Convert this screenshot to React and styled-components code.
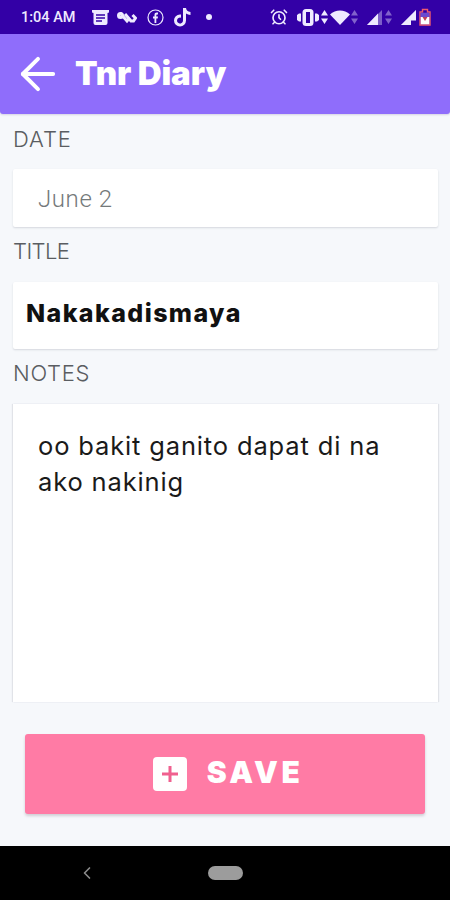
import React from "react";
import styled, { createGlobalStyle } from "styled-components";
import { ArrowLeft, AlarmClock, ChevronLeft } from "lucide-react";

const GlobalStyle = createGlobalStyle`
  html, body {
    margin: 0;
    padding: 0;
    background: #f6f8fb;
  }
  * {
    box-sizing: border-box;
  }
`;

const Screen = styled.div`
  width: 450px;
  height: 900px;
  display: flex;
  flex-direction: column;
  overflow: hidden;
  background: #f6f8fb;
  font-family: Inter, "Open Sans", "Liberation Sans", sans-serif;
`;

const StatusBar = styled.div`
  height: 34px;
  flex: none;
  display: flex;
  align-items: center;
  justify-content: space-between;
  padding: 0 19px 0 21px;
  background: #3300a6;
  color: #eeeaff;
`;

const StatusGroup = styled.div`
  display: flex;
  align-items: center;
`;

const Clock = styled.span`
  width: 71px;
  font-family: Roboto, sans-serif;
  font-size: 14.5px;
  font-weight: 500;
  white-space: nowrap;
`;

const Header = styled.div`
  height: 80px;
  flex: none;
  display: flex;
  align-items: center;
  padding: 0 0 0 12px;
  gap: 12px;
  background: #8f6dfb;
  color: #fff;
  border-radius: 0 0 3px 3px;
  box-shadow: 0 1px 2px rgba(60, 40, 120, 0.18);
`;

const HeaderTitle = styled.div`
  font-size: 33px;
  font-weight: 900;
  letter-spacing: -0.1px;
  margin-top: -3px;
  margin-left: -1px;
`;

const Body = styled.div`
  flex: 1;
  display: flex;
  flex-direction: column;
  padding: 13px 12px 0 13px;
  min-height: 0;
`;

const Label = styled.div`
  height: 25px;
  margin-bottom: ${(p) => p.$gap}px;
  font-size: 22px;
  line-height: 25px;
  font-weight: 300;
  color: #5a5d61;
  letter-spacing: ${(p) => p.$spacing}px;
`;

const Card = styled.div`
  height: ${(p) => p.$height}px;
  flex: none;
  display: flex;
  align-items: ${(p) => (p.$top ? "flex-start" : "center")};
  margin-bottom: 12px;
  padding-left: ${(p) => p.$inset}px;
  background: #fff;
  border-radius: 2px;
  box-shadow: 0 1px 2px rgba(40, 50, 70, 0.16);
`;

const DateText = styled.span`
  font-family: Roboto, sans-serif;
  font-size: 24px;
  font-weight: 300;
  color: #74797a;
  letter-spacing: 0.6px;
  margin-top: 2px;
`;

const TitleText = styled.span`
  font-size: 25px;
  font-weight: 800;
  color: #111;
  letter-spacing: 1.4px;
  margin-top: -5px;
`;

const NotesCard = styled(Card)`
  margin-bottom: 0;
  padding: 24px 40px 0 25px;
  border-radius: 0;
  box-shadow: -1px 0 1px rgba(40, 50, 70, 0.1), 1px 0 1px rgba(40, 50, 70, 0.1);
`;

const NotesText = styled.div`
  font-size: 25.5px;
  line-height: 36px;
  font-weight: 400;
  color: #1a1a1a;
  letter-spacing: 0.85px;
`;

const Footer = styled.div`
  height: 144px;
  flex: none;
  padding: 32px 25px 0;
`;

const SaveButton = styled.div`
  height: 80px;
  display: flex;
  align-items: center;
  justify-content: center;
  gap: 20px;
  padding: 0 0 4px 6px;
  background: #ff7ba5;
  border-radius: 3px;
  box-shadow: 0 2px 3px rgba(60, 40, 60, 0.2);
`;

const PlusBox = styled.div`
  width: 34px;
  height: 34px;
  margin-top: 4px;
  display: flex;
  align-items: center;
  justify-content: center;
  background: #fff;
  border-radius: 4px;
`;

const SaveLabel = styled.span`
  font-size: 30px;
  font-weight: 900;
  color: #fff;
  letter-spacing: 3.5px;
`;

const NavBar = styled.div`
  height: 54px;
  flex: none;
  position: relative;
  display: flex;
  align-items: center;
  justify-content: center;
  background: #000;
`;

const NavBack = styled.div`
  position: absolute;
  left: 77px;
  top: 17px;
  color: #8a8a8a;
  display: flex;
`;

const HomePill = styled.div`
  width: 35px;
  height: 14px;
  border-radius: 7px;
  background: #9c9c9c;
`;

const StatusIcon = styled.svg`
  display: block;
  flex: none;
  margin-left: ${(p) => p.$left || 0}px;
`;

const AlarmSlot = styled.div`
  display: flex;
  color: #eeeaff;
`;

const NewsIcon = () => (
  <StatusIcon width="17" height="15" viewBox="0 0 17 15">
    <path fill="currentColor" d="M0 0h17v2.5l-1.5.5V13a2 2 0 0 1-2 2H3.5a2 2 0 0 1-2-2V3L0 2.5Z" />
    <path stroke="#3300a6" strokeWidth="1.5" d="M4 5h9M4 8h9M4 11h6" />
  </StatusIcon>
);

const LoopIcon = () => (
  <StatusIcon $left={8} width="20" height="13" viewBox="0 0 20 13">
    <g fill="none" stroke="currentColor" strokeWidth="3">
      <path d="M3 2l7 8 2.500-3" />
      <path d="M8 3l6 7h2.500l2-3-3-3" />
      <circle cx="3.500" cy="4.500" r="2" />
    </g>
  </StatusIcon>
);

const FacebookIcon = () => (
  <StatusIcon $left={10} width="17" height="17" viewBox="0 0 17 17">
    <circle cx="8.500" cy="8.500" r="7.500" fill="none" stroke="currentColor" strokeWidth="1.200" />
    <path fill="currentColor" d="M7.500 14V9.500H6V7.500h1.500V6c0-1.600 1-2.400 2.300-2.400h1.200v2H10c-.5 0-.7.3-.7.8v1.100H11l-.3 2H9.300V14Z" />
  </StatusIcon>
);

const TiktokIcon = () => (
  <StatusIcon $left={10} width="18" height="19" viewBox="0 0 18 19">
    <path fill="currentColor" d="M9 0h3c.2 2.300 1.700 3.800 4.500 4v3c-1.700 0-3.200-.5-4.500-1.400V12.500a6 6 0 1 1-6-6c.4 0 .7 0 1 .1v3.200a3 3 0 1 0 2 2.800Z" />
  </StatusIcon>
);

const WifiIcon = () => (
  <StatusIcon $left={2} width="20" height="15" viewBox="0 0 20 15">
    <path fill="currentColor" d="M0 4.500C5.500-1 14.500-1 20 4.500L10 15Z" />
  </StatusIcon>
);

const VibrateIcon = () => (
  <StatusIcon $left={9} width="22" height="17" viewBox="0 0 22 17">
    <rect x="5.500" y="0" width="11" height="17" rx="3.500" fill="currentColor" />
    <rect x="9" y="3" width="4" height="11" fill="#3300a6" />
    <path fill="currentColor" d="M0 6 2 4.500h2v8H2L0 11ZM22 6 20 4.500h-2v8h2l2-1.500Z" />
  </StatusIcon>
);

const Arrows = ({ dim, left }) => (
  <StatusIcon $left={left} width="7" height="14" viewBox="0 0 7 14" opacity={dim ? 0.42 : 1}>
    <path fill="currentColor" d="M3.500 0 7 5.500H0ZM3.500 14 0 8.500h7Z" />
  </StatusIcon>
);

const SignalIcon = ({ left, half }) => (
  <StatusIcon $left={left} width="15" height="15" viewBox="0 0 15 15">
    <path fill="currentColor" opacity="0.4" d="M15 0v15H0Z" />
    <path fill="currentColor" d={half ? "M11 3.500V15H0Z" : "M15 0v15H0Z"} />
    {!half && <path fill="#3300a6" d="M10 10.500h5V15h-5Z" />}
  </StatusIcon>
);

const BatteryIcon = () => (
  <StatusIcon $left={3} width="12" height="18" viewBox="0 0 12 18">
    <path fill="none" stroke="#f05a6e" strokeWidth="1.400" d="M1 4h2.500V1.500h5V4H11v13H1Z" />
    <path fill="#6a4ad0" d="M1.700 4.700h8.600v4.500H1.700Z" />
    <path fill="#fff" d="M1.700 9h8.600v7.300H1.700Z" />
    <path fill="#c0405c" d="M3.500 9h5L6 13Z" />
  </StatusIcon>
);

function StatusRow() {
  return (
    <StatusBar>
      <StatusGroup>
        <Clock>1:04 AM</Clock>
        <NewsIcon />
        <LoopIcon />
        <FacebookIcon />
        <TiktokIcon />
        <StatusIcon $left={14} width="6" height="6" viewBox="0 0 6 6">
          <circle cx="3" cy="3" r="3" fill="currentColor" />
        </StatusIcon>
      </StatusGroup>
      <StatusGroup>
        <AlarmSlot>
          <AlarmClock size={18} strokeWidth={2.2} />
        </AlarmSlot>
        <VibrateIcon />
        <Arrows left={2} />
        <WifiIcon />
        <Arrows dim left={1} />
        <SignalIcon left={9} half />
        <Arrows dim left={3} />
        <SignalIcon left={9} />
        <BatteryIcon />
      </StatusGroup>
    </StatusBar>
  );
}

export default function App() {
  return (
    <Screen>
      <GlobalStyle />
      <StatusRow />
      <Header>
        <ArrowLeft size={52} strokeWidth={1.8} />
        <HeaderTitle>Tnr Diary</HeaderTitle>
      </Header>
      <Body>
        <Label $gap={17} $spacing={0.9}>DATE</Label>
        <Card $height={58} $inset={25}>
          <DateText>June 2</DateText>
        </Card>
        <Label $gap={18} $spacing={-0.6}>TITLE</Label>
        <Card $height={67} $inset={13}>
          <TitleText>Nakakadismaya</TitleText>
        </Card>
        <Label $gap={18} $spacing={0.7}>NOTES</Label>
        <NotesCard $height={298} $top>
          <NotesText>oo bakit ganito dapat di na ako nakinig</NotesText>
        </NotesCard>
      </Body>
      <Footer>
        <SaveButton>
          <PlusBox>
            <svg width="18" height="18" viewBox="0 0 18 18">
              <path stroke="#f0608f" strokeWidth="3" d="M9 1v16M1 9h16" />
            </svg>
          </PlusBox>
          <SaveLabel>SAVE</SaveLabel>
        </SaveButton>
      </Footer>
      <NavBar>
        <NavBack>
          <ChevronLeft size={20} strokeWidth={2} />
        </NavBack>
        <HomePill />
      </NavBar>
    </Screen>
  );
}
